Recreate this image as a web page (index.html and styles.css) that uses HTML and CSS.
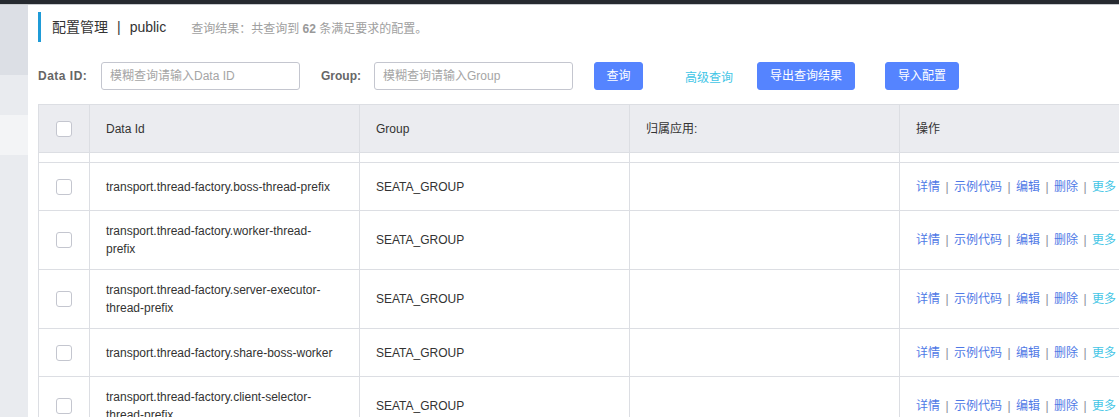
FILE: index.html
```html
<!DOCTYPE html>
<html lang="zh-CN">
<head>
<meta charset="utf-8">
<title>配置管理</title>
<link rel="stylesheet" href="styles.css">
</head>
<body>
<div class="topbar"></div>
<div class="layout">
  <aside class="sidebar">
    <div class="sb-block sb-a"></div>
    <div class="sb-block sb-b"></div>
    <div class="sb-block sb-c"></div>
    <div class="sb-rest"></div>
  </aside>
  <main class="main">
    <div class="title-row">
      <h1 class="title">配置管理<span class="title-sep">|</span>public</h1>
      <span class="summary">查询结果：共查询到 <b>62</b> 条满足要求的配置。</span>
    </div>
    <div class="search-row">
      <label class="field-label label-id">Data ID:</label>
      <input class="field-input" type="text" placeholder="模糊查询请输入Data ID">
      <label class="field-label label-group">Group:</label>
      <input class="field-input" type="text" placeholder="模糊查询请输入Group">
      <button class="btn btn-query">查询</button>
      <a class="adv-link">高级查询</a>
      <button class="btn btn-export">导出查询结果</button>
      <button class="btn btn-import">导入配置</button>
    </div>
    <div class="table">
      <div class="row head">
        <div class="cell cell-check"><span class="checkbox"></span></div>
        <div class="cell">Data Id</div>
        <div class="cell">Group</div>
        <div class="cell">归属应用:</div>
        <div class="cell">操作</div>
      </div>
      <div class="row sliver">
        <div class="cell"></div><div class="cell"></div><div class="cell"></div><div class="cell"></div><div class="cell"></div>
      </div>
      <div class="row body">
        <div class="cell cell-check"><span class="checkbox"></span></div>
        <div class="cell cell-id">transport.thread-factory.boss-thread-prefix</div>
        <div class="cell">SEATA_GROUP</div>
        <div class="cell"></div>
        <div class="cell cell-ops"><a class="op">详情</a><span class="op-sep">|</span><a class="op">示例代码</a><span class="op-sep">|</span><a class="op">编辑</a><span class="op-sep">|</span><a class="op">删除</a><span class="op-sep">|</span><a class="op op-more">更多</a></div>
      </div>
      <div class="row body">
        <div class="cell cell-check"><span class="checkbox"></span></div>
        <div class="cell cell-id">transport.thread-factory.worker-thread-prefix</div>
        <div class="cell">SEATA_GROUP</div>
        <div class="cell"></div>
        <div class="cell cell-ops"><a class="op">详情</a><span class="op-sep">|</span><a class="op">示例代码</a><span class="op-sep">|</span><a class="op">编辑</a><span class="op-sep">|</span><a class="op">删除</a><span class="op-sep">|</span><a class="op op-more">更多</a></div>
      </div>
      <div class="row body">
        <div class="cell cell-check"><span class="checkbox"></span></div>
        <div class="cell cell-id">transport.thread-factory.server-executor-thread-prefix</div>
        <div class="cell">SEATA_GROUP</div>
        <div class="cell"></div>
        <div class="cell cell-ops"><a class="op">详情</a><span class="op-sep">|</span><a class="op">示例代码</a><span class="op-sep">|</span><a class="op">编辑</a><span class="op-sep">|</span><a class="op">删除</a><span class="op-sep">|</span><a class="op op-more">更多</a></div>
      </div>
      <div class="row body">
        <div class="cell cell-check"><span class="checkbox"></span></div>
        <div class="cell cell-id">transport.thread-factory.share-boss-worker</div>
        <div class="cell">SEATA_GROUP</div>
        <div class="cell"></div>
        <div class="cell cell-ops"><a class="op">详情</a><span class="op-sep">|</span><a class="op">示例代码</a><span class="op-sep">|</span><a class="op">编辑</a><span class="op-sep">|</span><a class="op">删除</a><span class="op-sep">|</span><a class="op op-more">更多</a></div>
      </div>
      <div class="row body">
        <div class="cell cell-check"><span class="checkbox"></span></div>
        <div class="cell cell-id">transport.thread-factory.client-selector-thread-prefix</div>
        <div class="cell">SEATA_GROUP</div>
        <div class="cell"></div>
        <div class="cell cell-ops"><a class="op">详情</a><span class="op-sep">|</span><a class="op">示例代码</a><span class="op-sep">|</span><a class="op">编辑</a><span class="op-sep">|</span><a class="op">删除</a><span class="op-sep">|</span><a class="op op-more">更多</a></div>
      </div>
    </div>
  </main>
</div>
</body>
</html>
```

FILE: styles.css
```css
html, body {
  margin: 0;
  padding: 0;
  height: 100%;
  overflow: hidden;
  background: #fff;
  font-family: "Liberation Sans", "Noto Sans CJK SC", sans-serif;
  color: #333;
  font-size: 12px;
}

.topbar {
  height: 4px;
  background: #262a30;
  border-bottom: 1px solid #c8cbcf;
}

.layout {
  display: flex;
  height: calc(100% - 5px);
}

.sidebar {
  width: 28px;
  flex: none;
  display: flex;
  flex-direction: column;
  background: #e9ebef;
}
.sb-a { height: 70px; background: #dcdfe5; }
.sb-b { height: 40px; background: #e9ebef; }
.sb-c { height: 40px; background: #f3f4f6; }
.sb-rest { flex: 1; background: #e9ebef; }

.main {
  flex: 1;
  min-width: 0;
  padding: 7px 0 0 10px;
  overflow: hidden;
}

.title-row {
  height: 30px;
  border-left: 3px solid #1f9bd7;
  padding-left: 11px;
  display: flex;
  align-items: center;
}
.title {
  margin: 0;
  font-size: 14px;
  font-weight: normal;
  color: #333;
  line-height: 20px;
}
.title-sep {
  margin: 0 9px;
}
.summary {
  margin-left: 25px;
  font-size: 12px;
  color: #a0a0a0;
}
.summary b {
  color: #999;
}

.search-row {
  margin-top: 20px;
  height: 28px;
  display: flex;
  align-items: center;
}
.field-label {
  font-weight: bold;
  font-size: 12px;
  color: #666;
}
.label-id { width: 63px; letter-spacing: 0.5px; }
.label-group { width: 53px; margin-left: 21px; }
.field-input {
  box-sizing: border-box;
  width: 199px;
  height: 28px;
  margin: 0;
  border: 1px solid #c4c6cf;
  border-radius: 3px;
  padding: 0 8px;
  font-family: inherit;
  font-size: 12px;
  color: #333;
  outline: none;
}
.field-input::placeholder {
  color: #a5a5a5;
}
.btn {
  box-sizing: border-box;
  height: 28px;
  margin: 0;
  padding: 0 12px;
  border: 1px solid #5584ff;
  border-radius: 3px;
  background: #5584ff;
  color: #fff;
  font-family: inherit;
  font-size: 12px;
  line-height: 26px;
}
.btn-query { margin-left: 21px; width: 49px; padding: 0; }
.adv-link {
  margin-left: 42px;
  color: #3fc5e6;
  font-size: 12px;
}
.btn-export { margin-left: 24px; width: 98px; padding: 0; }
.btn-import { margin-left: 30px; width: 74px; padding: 0; }

.table {
  margin-top: 14px;
  width: 1300px;
  border-top: 1px solid #dcdee3;
  border-left: 1px solid #dcdee3;
}
.row {
  display: grid;
  grid-template-columns: 51px 270px 270px 270px 1fr;
  border-bottom: 1px solid #dcdee3;
}
.cell {
  box-sizing: border-box;
  display: flex;
  align-items: center;
  padding: 11px 16px;
  line-height: 18px;
  border-right: 1px solid #dcdee3;
  font-size: 12px;
  color: #333;
}
.head {
  background: #ebecf0;
  height: 48px;
  box-sizing: border-box;
}
.sliver {
  height: 10px;
  box-sizing: border-box;
}
.sliver .cell {
  padding: 0;
}
.body {
  min-height: 48px;
  box-sizing: border-box;
}
.cell-check {
  justify-content: center;
  padding: 0;
}
.cell-id {
  padding-right: 22px;
}
.checkbox {
  display: block;
  box-sizing: border-box;
  width: 16px;
  height: 16px;
  border: 1px solid #c4c6cf;
  border-radius: 3px;
  background: #fff;
  margin-left: -1px;
}
.cell-ops {
  white-space: nowrap;
}
.op {
  color: #4f79e6;
}
.op-more {
  color: #45c6e6;
}
.op-sep {
  display: inline-block;
  width: 14px;
  text-align: center;
  color: #8c8f9c;
}
```
